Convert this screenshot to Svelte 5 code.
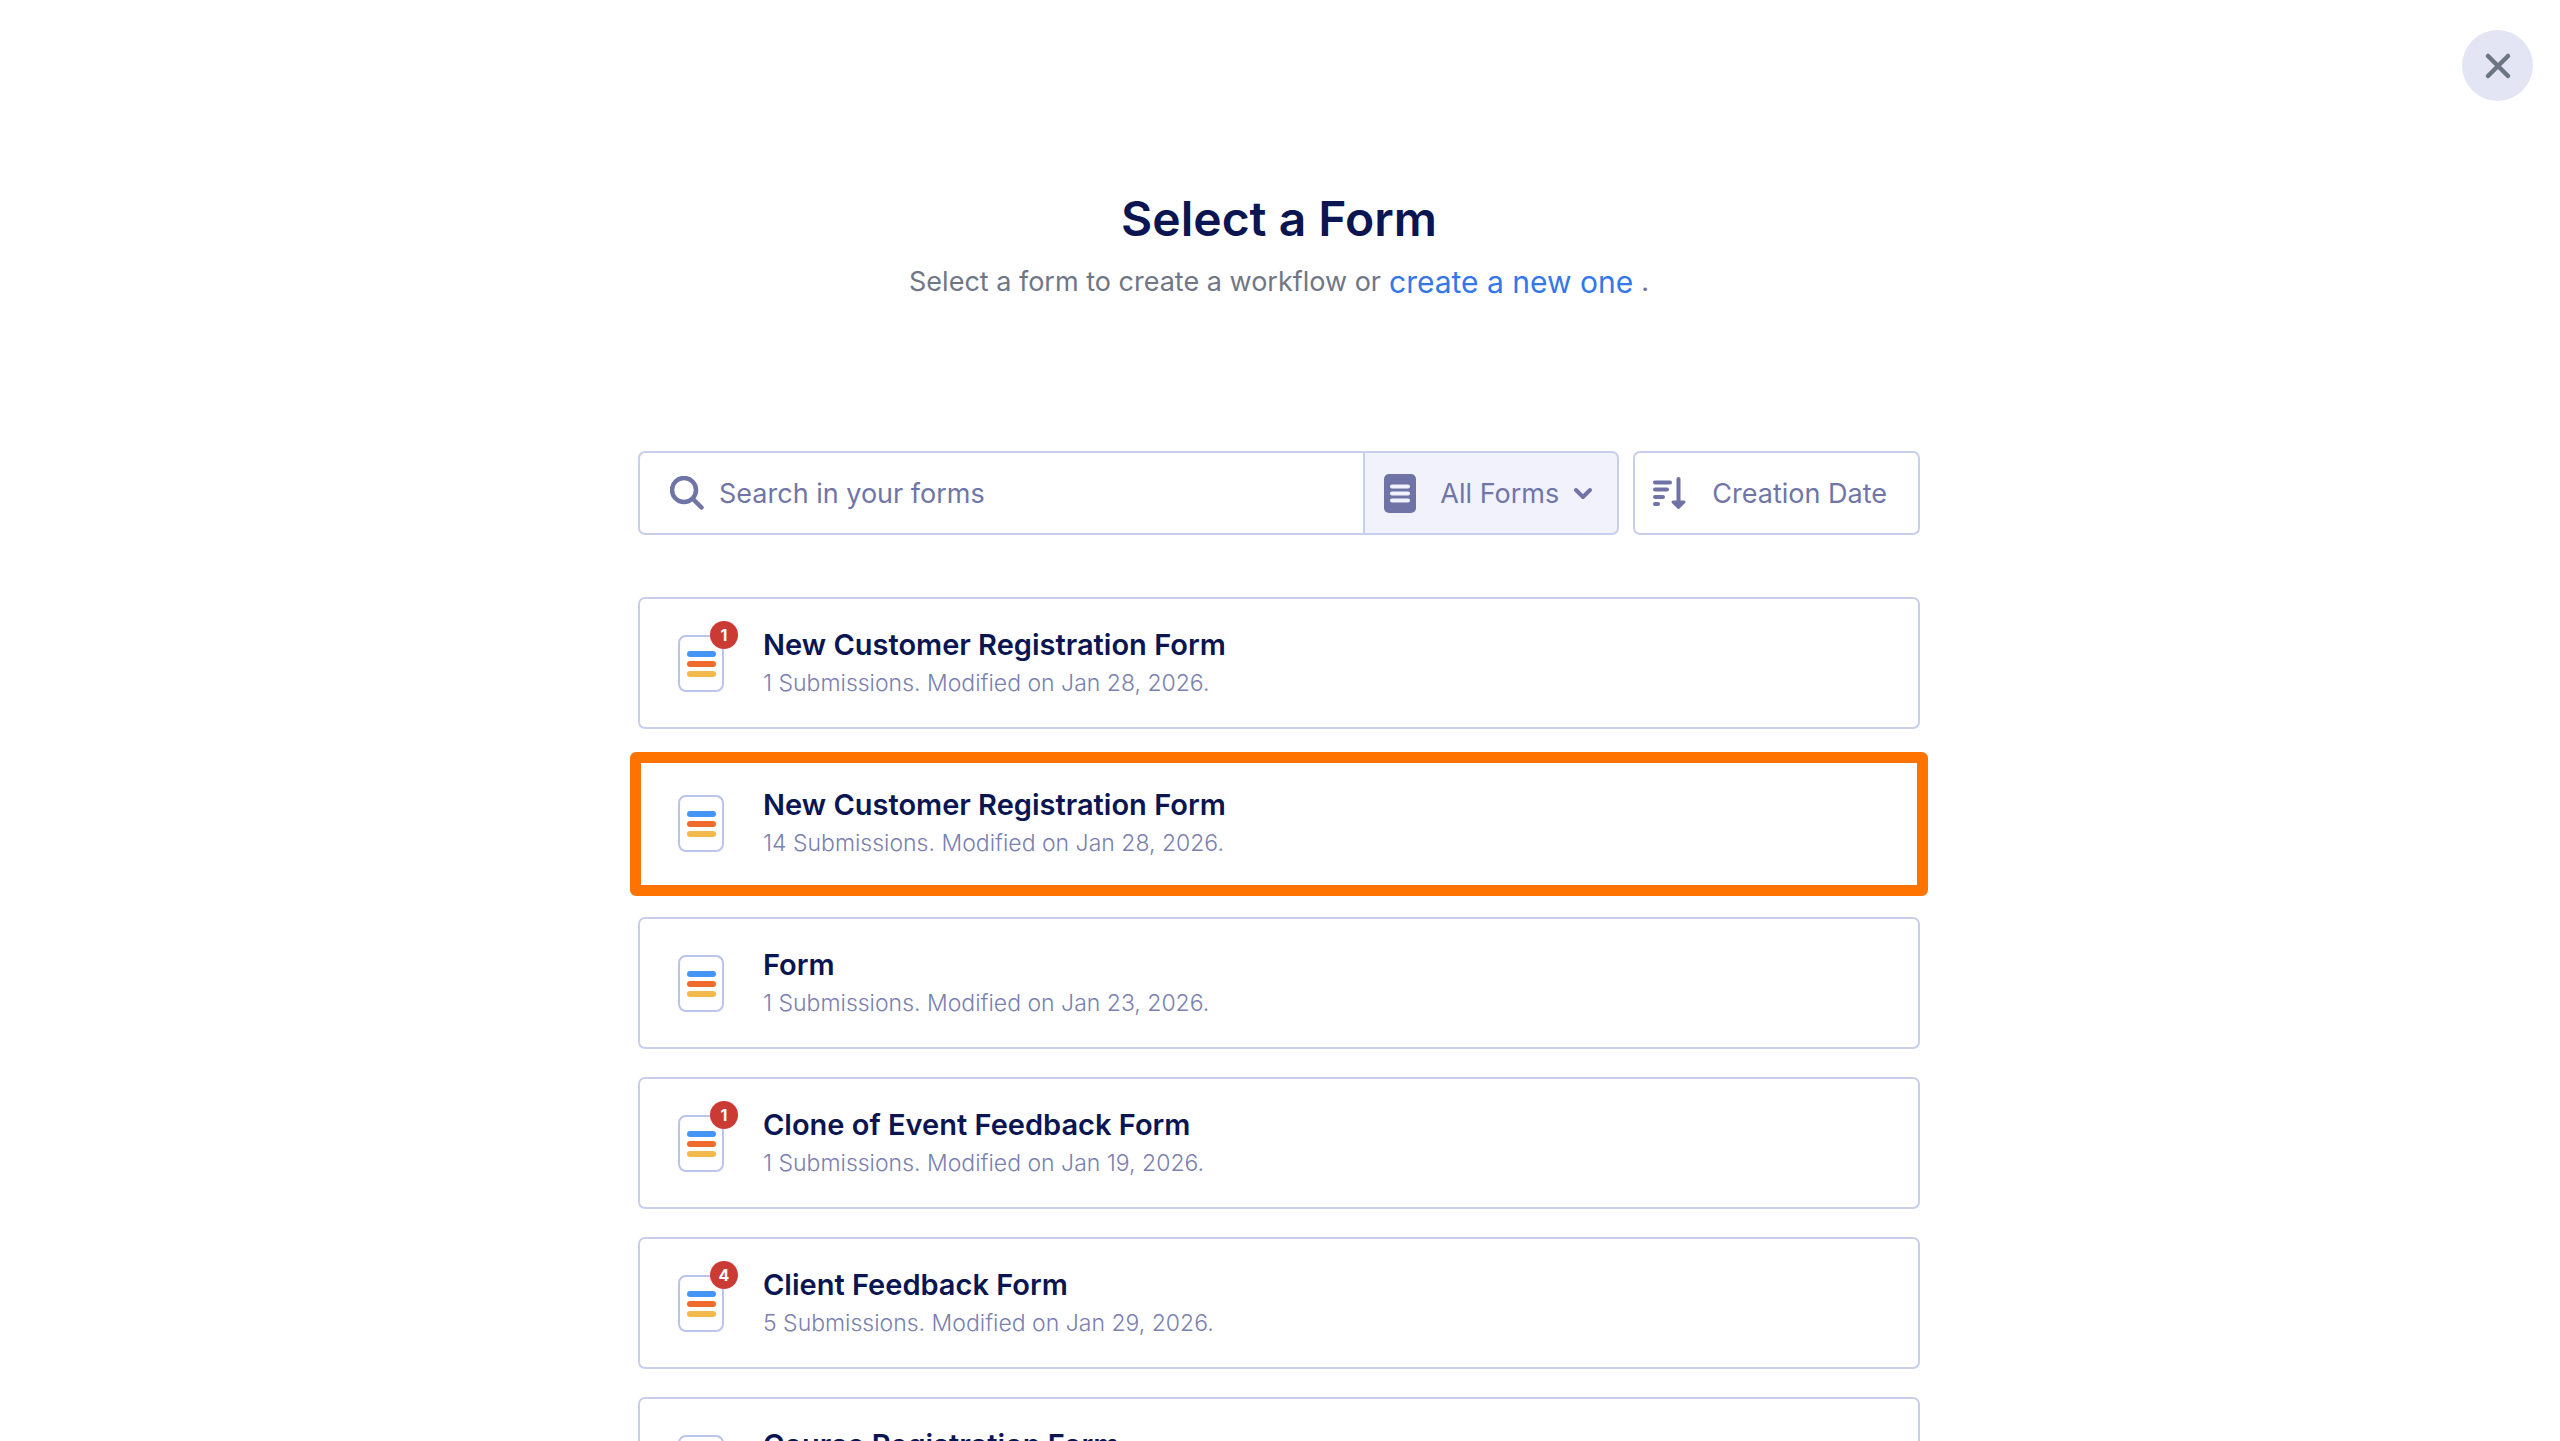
<script>
  const forms = [
    { id: 1, name: 'New Customer Registration Form', submissions: 1, modified: 'Jan 28, 2026', unread: 1 },
    { id: 2, name: 'New Customer Registration Form', submissions: 14, modified: 'Jan 28, 2026', unread: 0 },
    { id: 3, name: 'Form', submissions: 1, modified: 'Jan 23, 2026', unread: 0 },
    { id: 4, name: 'Clone of Event Feedback Form', submissions: 1, modified: 'Jan 19, 2026', unread: 1 },
    { id: 5, name: 'Client Feedback Form', submissions: 5, modified: 'Jan 29, 2026', unread: 4 },
    { id: 6, name: 'Course Registration Form', submissions: 2, modified: 'Jan 15, 2026', unread: 0 }
  ];
  const highlighted = 2;
  let query = $state('');
  let filter = $state('all');
</script>

<div class="screen">
  <button class="close" type="button" aria-label="Close">
    <svg viewBox="0 0 28 28" aria-hidden="true"><path d="M4 4l20 20M24 4L4 24" /></svg>
  </button>

  <main class="content">
    <header class="heading">
      <h1>Select a Form</h1>
      <p>
        <span>Select a form to create a workflow or</span>
        <a href="#new">create a new one</a>
        <span>.</span>
      </p>
    </header>

    <div class="toolbar">
      <div class="search-group">
        <label class="search">
          <svg class="search-icon" viewBox="0 0 34 34" aria-hidden="true">
            <circle cx="14" cy="14" r="12" /><path d="M23 23l8.500 8.500" />
          </svg>
          <input type="text" placeholder="Search in your forms" aria-label="Search in your forms" bind:value={query} />
        </label>
        <label class="filter">
          <svg class="filter-icon" viewBox="0 0 32 39" aria-hidden="true">
            <rect width="32" height="39" rx="5" />
            <path d="M8 12.500h16M8 19.500h16M8 26.500h16" />
          </svg>
          <select bind:value={filter} aria-label="Filter forms">
            <option value="all">All Forms</option>
          </select>
          <svg class="chevron" viewBox="0 0 20 13" aria-hidden="true"><path d="M3 3l7 7 7-7" /></svg>
        </label>
      </div>
      <button class="sort" type="button">
        <svg viewBox="0 0 34 34" aria-hidden="true">
          <path class="line" d="M3 6.500h15M3 13.500h12M3 21h8M3 28h3M26.500 3v22" />
          <path class="head" d="M21 26h11l-5.500 5.500z" />
        </svg>
        Creation Date
      </button>
    </div>

    <ul class="forms">
      {#each forms as form (form.id)}
        <li>
          <button class="card" class:highlighted={form.id === highlighted} type="button">
            <span class="thumb">
              <svg viewBox="0 0 46 57" aria-hidden="true">
                <rect class="page" x="1" y="1" width="44" height="55" rx="7" />
                <rect x="9" y="16" width="29" height="6" rx="3" fill="#4595f7" />
                <rect x="9" y="26" width="29" height="6" rx="3" fill="#ef6a2c" />
                <rect x="9" y="36" width="29" height="6" rx="3" fill="#f3b94b" />
              </svg>
              {#if form.unread}<span class="badge">{form.unread}</span>{/if}
            </span>
            <span class="info">
              <span class="name">{form.name}</span>
              <span class="meta">{form.submissions} Submissions. Modified on {form.modified}.</span>
            </span>
          </button>
        </li>
      {/each}
    </ul>
  </main>
</div>

<style>
  :global(body) {
    background: #fff;
  }
  .screen {
    height: 100vh;
    overflow: hidden;
    box-sizing: border-box;
    position: relative;
    padding: 188px 26px 0 24px;
    font-family: Inter, 'Liberation Sans', sans-serif;
    color: #0a1551;
  }
  button,
  input,
  select {
    font: inherit;
    color: inherit;
    margin: 0;
  }
  .close {
    position: absolute;
    top: 30px;
    right: 27px;
    width: 71px;
    height: 71px;
    padding: 0;
    border: 0;
    border-radius: 50%;
    background: #e3e5f5;
    display: grid;
    place-items: center;
  }
  .close svg {
    width: 28px;
    height: 28px;
    fill: none;
    stroke: #6c7583;
    stroke-width: 4.5;
    stroke-linecap: round;
  }
  .content {
    max-width: 1282px;
    margin: 0 auto;
  }
  .heading {
    text-align: center;
    margin-bottom: 149px;
  }
  h1 {
    margin: 0;
    font-size: 48px;
    line-height: 62px;
    font-weight: 600;
  }
  p {
    display: flex;
    flex-wrap: wrap;
    justify-content: center;
    align-items: center;
    column-gap: 8px;
    margin: 12px 0 0;
    font-size: 27px;
    line-height: 40px;
    color: #6f7787;
  }
  p a {
    font-size: 30px;
    color: #3377ea;
    text-decoration: none;
  }
  .toolbar {
    display: flex;
    gap: 14px;
    margin-bottom: 62px;
    font-size: 27px;
    color: #6f76a7;
  }
  .search-group {
    flex: 1;
    display: flex;
    height: 84px;
  }
  .search {
    flex: 1;
    display: flex;
    align-items: center;
    gap: 15px;
    padding-left: 30px;
    border: 2px solid #c8cfed;
    border-right: 0;
    border-radius: 7px 0 0 7px;
  }
  .search-icon {
    width: 34px;
    height: 34px;
    fill: none;
    stroke: #6f76a7;
    stroke-width: 4.5;
    stroke-linecap: round;
  }
  .search input {
    flex: 1;
    min-width: 0;
    height: 76px;
    padding: 0;
    border: 0;
    outline: 0;
    background: none;
  }
  .search input::placeholder {
    color: #6f76a7;
    opacity: 1;
  }
  .filter {
    box-sizing: border-box;
    width: 256px;
    display: flex;
    align-items: center;
    padding: 0 24px 0 19px;
    border: 2px solid #c8cfed;
    border-radius: 0 7px 7px 0;
    background: #f2f2fd;
  }
  .filter-icon {
    width: 32px;
    height: 39px;
    margin-right: 24px;
    fill: #6f73a5;
  }
  .filter-icon path {
    stroke: #f2f2fd;
    stroke-width: 4;
    stroke-linecap: round;
  }
  .filter select {
    appearance: none;
    flex: 1;
    min-width: 0;
    height: 76px;
    padding: 0;
    border: 0;
    outline: 0;
    background: none;
  }
  .chevron {
    width: 20px;
    height: 13px;
    fill: none;
    stroke: #6f73a5;
    stroke-width: 4;
    stroke-linecap: round;
    stroke-linejoin: round;
  }
  .sort {
    box-sizing: border-box;
    height: 84px;
    display: flex;
    align-items: center;
    gap: 26px;
    padding: 0 31px 0 17px;
    border: 2px solid #c8cfed;
    border-radius: 7px;
    background: #fff;
  }
  .sort svg {
    width: 34px;
    height: 34px;
  }
  .sort .line {
    fill: none;
    stroke: #6f73a5;
    stroke-width: 4;
    stroke-linecap: round;
  }
  .sort .head {
    fill: #6f73a5;
    stroke: #6f73a5;
    stroke-width: 3;
    stroke-linejoin: round;
  }
  .forms {
    list-style: none;
    margin: 0;
    padding: 0;
    display: grid;
    gap: 28px;
  }
  .card {
    position: relative;
    box-sizing: border-box;
    width: 100%;
    min-height: 132px;
    display: flex;
    align-items: center;
    gap: 39px;
    padding: 0 38px;
    border: 2px solid #c8cfed;
    border-radius: 7px;
    background: #fff;
    text-align: left;
  }
  .card.highlighted::after {
    content: '';
    position: absolute;
    inset: -7px -10px -9px;
    border: 11px solid #ff7300;
    border-radius: 6px;
  }
  .thumb {
    position: relative;
    width: 46px;
    height: 57px;
  }
  .thumb svg {
    display: block;
    width: 46px;
    height: 57px;
  }
  .page {
    fill: #fff;
    stroke: #b9c5ec;
    stroke-width: 2;
  }
  .badge {
    position: absolute;
    top: -14px;
    right: -14px;
    width: 28px;
    height: 28px;
    border-radius: 50%;
    background: #cb3a33;
    color: #fff;
    font-size: 16px;
    line-height: 28px;
    font-weight: 700;
    text-align: center;
  }
  .info {
    display: grid;
    gap: 2px;
  }
  .name {
    font-size: 29px;
    line-height: 38px;
    font-weight: 600;
  }
  .meta {
    font-size: 23px;
    line-height: 34px;
    font-weight: 300;
    color: #7a80b0;
  }
</style>
